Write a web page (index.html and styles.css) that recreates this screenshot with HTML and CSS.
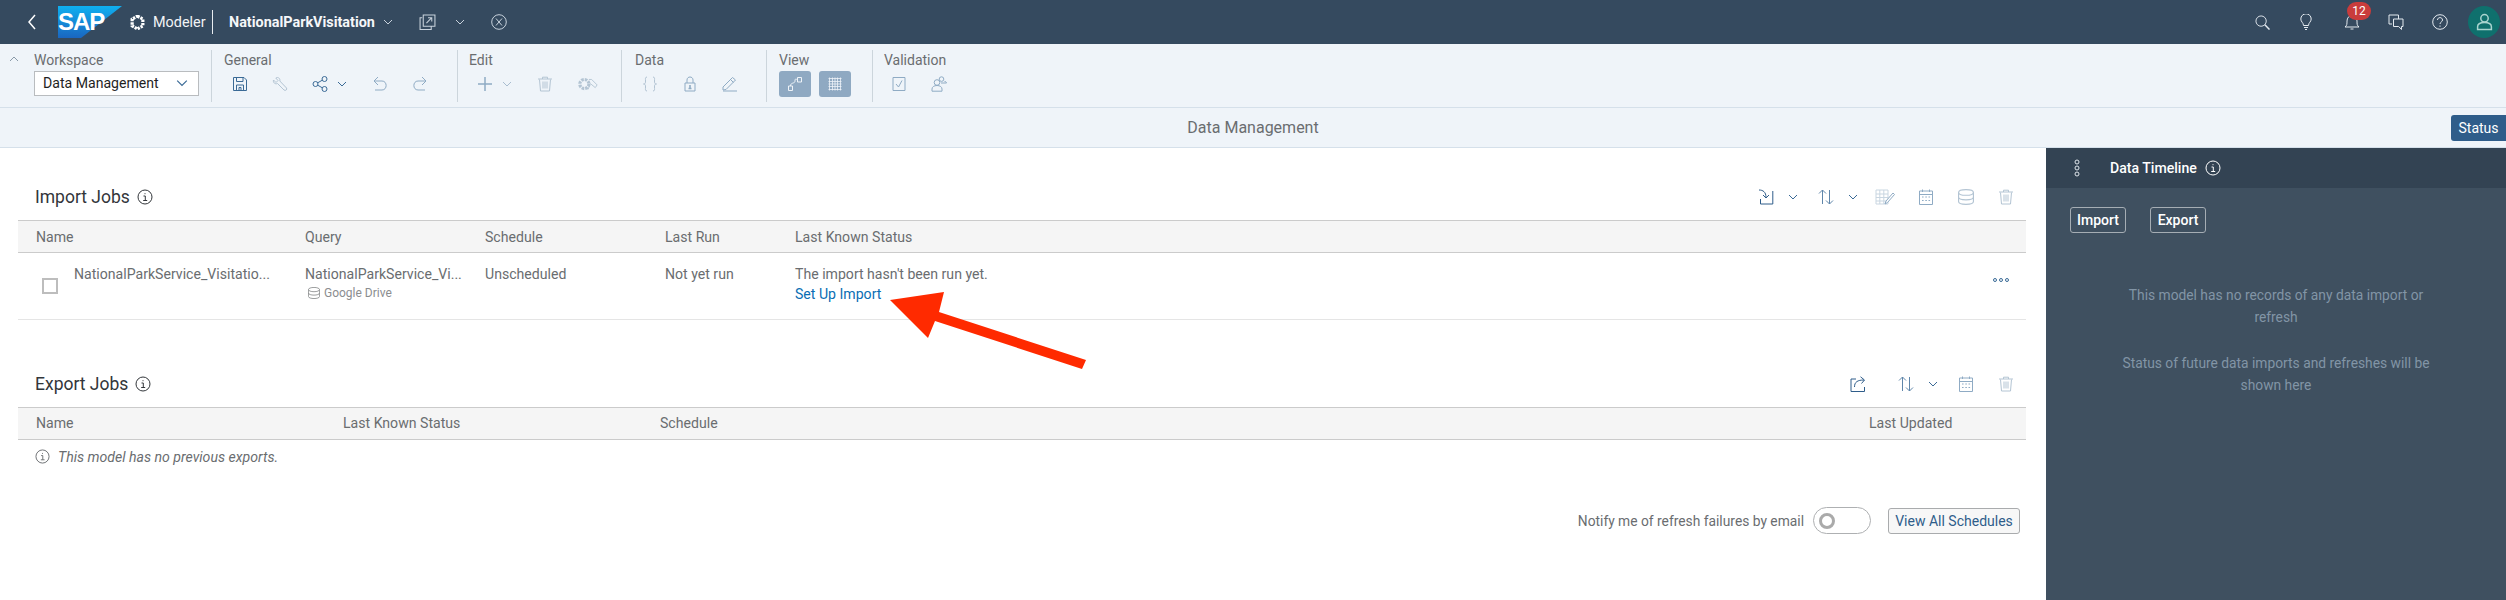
FILE: index.html
```html
<!DOCTYPE html>
<html lang="en">
  <head>
    <meta charset="UTF-8" />
    <title>Modeler - NationalParkVisitation</title>
    <link rel="stylesheet" href="styles.css">
  </head>
  <body>
    <svg class="sprite" width="0" height="0">
      <symbol id="chev" viewBox="0 0 10 10"><path d="M1 3l4 4 4-4"/></symbol>
      <symbol id="info" viewBox="0 0 16 16"><circle cx="8" cy="8" r="7"/><path d="M6.500 7H8.300v4.500M6.200 11.500h4M8 4.200v1"/></symbol>
      <symbol id="save" viewBox="0 0 16 16"><path d="M2 1.500h10l2.500 2.500v10.500H1.500V1.500zM4.500 1.500v4h6.500v-4M4.500 14.500V9h7v5.500M7 11.500h2v3H7z"/></symbol>
      <symbol id="wrench" viewBox="0 0 16 16"><path d="M1.500 4l2.500 2.500 2-2L3.800 2C6 .5 8.500 2.500 7.800 5l6.700 7c1 1.500-1 3.200-2.500 2L5.500 7.500C3 8.500 .8 6.500 1.500 4z"/></symbol>
      <symbol id="share" viewBox="0 0 16 16"><circle cx="3.500" cy="8" r="2.500"/><circle cx="12.500" cy="3" r="2.500"/><circle cx="12.500" cy="13" r="2.500"/><path d="M5.700 6.800l4.600-2.600M5.700 9.200l4.600 2.600"/></symbol>
      <symbol id="undo" viewBox="0 0 16 16"><path d="M6 1L2 5l4 4M2 5h8c5.500 0 5.500 9 0 9H3"/></symbol>
      <symbol id="redo" viewBox="0 0 16 16"><path d="M10 1l4 4-4 4M14 5H6c-5.500 0-5.500 9 0 9h7"/></symbol>
      <symbol id="plus" viewBox="0 0 16 16"><path d="M8 1v14M1 8h14" stroke-width="1.500"/></symbol>
      <symbol id="trash" viewBox="0 0 16 16"><path d="M1 3h14M5.500 3V1.200h5V3M2.500 3.500L3.500 15h9l1-11.500M6 5.500v7M8 5.500v7M10 5.500v7"/></symbol>
      <symbol id="gears" viewBox="0 0 22 16"><circle cx="7" cy="8" r="5" stroke-width="3.500" stroke-dasharray="2.800 1.100"/><path d="M12 3l3 0 6 6-2 3-5.500-4.500M13 9l-2 5"/></symbol>
      <symbol id="braces" viewBox="0 0 16 16"><path d="M5 1C3 1 3.500 3 3.500 5S3.500 8 1.500 8c2 0 2 1 2 3S3 15 5 15M11 1c2 0 1.500 2 1.500 4S12.500 8 14.500 8c-2 0-2 1-2 3S13 15 11 15"/></symbol>
      <symbol id="lock" viewBox="0 0 12 16"><path d="M1 7h10v8H1zM3 7V4c0-4 6-4 6 0v3"/><path d="M6 9v3.500M4.500 12.500h3" stroke-width="1.600"/></symbol>
      <symbol id="pen" viewBox="0 0 16 16"><path d="M1 11L10.500 1.500l3 2.500L4 13.500l-3 .5zM1 15h14M8.500 3.500l3 3"/></symbol>
      <symbol id="nodes" viewBox="0 0 16 16"><path d="M1.500 10h4v4.500h-4zM10.500 1.500h4V6h-4zM3.500 10C3.500 6 8 8 8 5s1-1.500 2.500-1.500"/></symbol>
      <symbol id="grid" viewBox="0 0 16 16"><path d="M2.500 1.500v13M5.500 1.500v13M8 1.500v13M10.500 1.500v13M13.500 1.500v13M1.500 2.500h13M1.500 5.500h13M1.500 8h13M1.500 10.500h13M1.500 13.500h13" stroke-width=".8"/></symbol>
      <symbol id="check" viewBox="0 0 16 16"><path d="M2 1.500h12v13H2zM5 8l2.500 3L11 4.500"/></symbol>
      <symbol id="users" viewBox="0 0 16 16"><circle cx="6" cy="6.500" r="2.800"/><path d="M1 15.200v-2.200c0-2 2-3.500 5-3.500s5 1.500 5 3.500v2.200zM10.500 .8a2.300 2.300 0 1 1 0 4.600 2.300 2.300 0 0 1 0-4.600zM10 7h5.500c0-1-1-1.600-2-1.600"/></symbol>
      <symbol id="search" viewBox="0 0 16 16"><circle cx="6.500" cy="6.500" r="5.500"/><path d="M10.500 10.500l5 5" stroke-width="1.600"/></symbol>
      <symbol id="bulb" viewBox="0 0 12 16"><path d="M3.500 11.500C3.500 8.500 .8 8 .8 5a5.200 5.200 0 0 1 10.400 0c0 3-2.700 3.500-2.700 6.500zM4 13.500h4M5 15.500h2"/></symbol>
      <symbol id="bell" viewBox="0 0 16 16"><path d="M1 13c2-1.500 2-3 2-6s2-5.500 5-5.500 5 2.500 5 5.500 0 4.500 2 6zM6.500 15h3"/></symbol>
      <symbol id="chat" viewBox="0 0 16 16"><path d="M4 10H1V1h9.500v4M5.500 5H15v7.500h-1.500v3l-2.800-3H5.500z"/></symbol>
      <symbol id="help" viewBox="0 0 16 16"><circle cx="8" cy="8" r="7.300"/><path d="M5.500 6c0-3.200 5-3.200 5 0 0 2-2.500 2-2.500 4M8 11.500v1.300"/></symbol>
      <symbol id="person" viewBox="0 0 16 16"><circle cx="8" cy="4.500" r="3.500"/><path d="M1.500 15v-2.500C1.500 10 3.500 8.500 8 8.500s6.500 1.500 6.500 4V15z"/></symbol>
      <symbol id="hex" viewBox="0 0 14 14"><path d="M7 1l5 2.800v6.400L7 13l-5-2.800V3.800z" stroke-width="3" stroke-dasharray="2.200 .9"/></symbol>
      <symbol id="popout" viewBox="0 0 16 16"><path d="M3 3.500H1v11h10.500V12M4 1h11v10.500H4zM7 8.500L12 3.500M8.500 3.500H12V7"/></symbol>
      <symbol id="close" viewBox="0 0 16 16"><circle cx="8" cy="8" r="7.300"/><path d="M5 4.500l6 7M11 4.500l-6 7"/></symbol>
      <symbol id="back" viewBox="0 0 10 16"><path d="M8 1L2 8l6 7"/></symbol>
      <symbol id="import" viewBox="0 0 16 16"><path d="M1 1c4 0 7 2 7 7.500M5 6l3 3 3-3M14.800 2v13H2.500v-5"/></symbol>
      <symbol id="sort" viewBox="0 0 16 16"><path d="M4.500 15V1M1 4.500L4.500 1 8 4.500M11.500 1v14M8 11.500l3.500 3.500 3.500-3.500"/></symbol>
      <symbol id="grid-edit" viewBox="0 0 20 16"><path d="M1 1h12v14H1zM1 5h12M1 8.500h12M1 12h12M4.800 1v14M8.800 1v14"/><path d="M10 15l1-3 7-8 1.500 1.500-7 8z" fill="#fff" stroke="#8fabc4"/></symbol>
      <symbol id="calendar" viewBox="0 0 14 16"><path d="M.5 2h13v13.500H.5zM.5 5.500h13M3.500 .5v2.500M10.500 .5v2.500M3 8h1.600M6.300 8h1.600M9.500 8h1.600M3 11.500h1.600M6.300 11.500h1.600M9.500 11.500h1.600"/></symbol>
      <symbol id="db" viewBox="0 0 14 14"><ellipse cx="7" cy="3" rx="6.500" ry="2.500"/><path d="M.5 3v8c0 3.300 13 3.300 13 0V3M.5 7c0 3.300 13 3.300 13 0"/></symbol>
      <symbol id="export" viewBox="0 0 16 16"><path d="M6 3H1v12.500h13.500V11M4.500 11c0-5 3-7 9.500-7M10.500 .8L14.500 4l-3 3.500"/></symbol>
      <symbol id="stops" viewBox="0 0 6 18"><circle cx="3" cy="3" r="2"/><circle cx="3" cy="9" r="2"/><circle cx="3" cy="15" r="2"/></symbol>
      <symbol id="dots" viewBox="0 0 16 4"><circle cx="2" cy="2" r="1.500"/><circle cx="8" cy="2" r="1.500"/><circle cx="14" cy="2" r="1.500"/></symbol>
    </svg>

    <header class="shellBar">
      <div class="shellLeft">
        <svg class="ico shellBack"><use href="#back"/></svg>
        <svg class="sapLogo" viewBox="0 0 64 32">
          <defs>
            <linearGradient id="sapBlue" x1="0" y1="0" x2="0" y2="1">
              <stop offset="0" stop-color="#0fb0f0"/>
              <stop offset="1" stop-color="#1a66c0"/>
            </linearGradient>
          </defs>
          <polygon points="0,0 64,0 23,32 0,32" fill="url(#sapBlue)"/>
          <text x="0" y="24" class="sapText">SAP</text>
        </svg>
        <svg class="ico hexIcon"><use href="#hex"/></svg>
        <span class="shellApp">Modeler</span>
        <span class="shellDivider"></span>
        <span class="shellModel">NationalParkVisitation</span>
        <svg class="ico shellChev"><use href="#chev"/></svg>
        <svg class="ico shellPop"><use href="#popout"/></svg>
        <svg class="ico shellChev2"><use href="#chev"/></svg>
        <svg class="ico shellClose"><use href="#close"/></svg>
      </div>
      <div class="shellRight">
        <svg class="ico shellIcon iconSearch"><use href="#search"/></svg>
        <svg class="ico shellIcon iconBulb"><use href="#bulb"/></svg>
        <div class="bellWrap">
          <svg class="ico shellIcon"><use href="#bell"/></svg>
          <span class="badge">12</span>
        </div>
        <svg class="ico shellIcon iconChat"><use href="#chat"/></svg>
        <svg class="ico shellIcon iconHelp"><use href="#help"/></svg>
        <div class="avatar"><svg class="ico avatarIcon"><use href="#person"/></svg></div>
      </div>
    </header>

    <section class="toolbar">
      <div class="collapseCell"><svg class="ico chevSmall"><use href="#chev"/></svg></div>
      <div class="toolGroup groupWorkspace">
        <div class="toolLabel">Workspace</div>
        <div class="workspaceSelect">Data Management <svg class="ico selectChev"><use href="#chev"/></svg></div>
      </div>
      <div class="toolGroup groupGeneral">
        <div class="toolLabel">General</div>
        <div class="toolRow">
          <span class="tool on"><svg class="ico"><use href="#save"/></svg></span>
          <span class="tool"><svg class="ico"><use href="#wrench"/></svg></span>
          <span class="tool on"><svg class="ico"><use href="#share"/></svg></span>
          <span class="toolChev on"><svg class="ico"><use href="#chev"/></svg></span>
          <span class="tool mid"><svg class="ico"><use href="#undo"/></svg></span>
          <span class="tool mid"><svg class="ico"><use href="#redo"/></svg></span>
        </div>
      </div>
      <div class="toolGroup groupEdit">
        <div class="toolLabel">Edit</div>
        <div class="toolRow">
          <span class="tool mid"><svg class="ico"><use href="#plus"/></svg></span>
          <span class="toolChev"><svg class="ico"><use href="#chev"/></svg></span>
          <span class="tool"><svg class="ico"><use href="#trash"/></svg></span>
          <span class="tool gearTool"><svg class="ico wideIcon"><use href="#gears"/></svg></span>
        </div>
      </div>
      <div class="toolGroup groupData">
        <div class="toolLabel">Data</div>
        <div class="toolRow">
          <span class="tool"><svg class="ico"><use href="#braces"/></svg></span>
          <span class="tool mid"><svg class="ico lock"><use href="#lock"/></svg></span>
          <span class="tool mid"><svg class="ico"><use href="#pen"/></svg></span>
        </div>
      </div>
      <div class="toolGroup groupView">
        <div class="toolLabel">View</div>
        <div class="toolRow viewRow">
          <span class="viewBtn"><svg class="ico"><use href="#nodes"/></svg></span>
          <span class="viewBtn"><svg class="ico"><use href="#grid"/></svg></span>
        </div>
      </div>
      <div class="toolGroup groupValidation">
        <div class="toolLabel">Validation</div>
        <div class="toolRow">
          <span class="tool mid"><svg class="ico"><use href="#check"/></svg></span>
          <span class="tool mid"><svg class="ico"><use href="#users"/></svg></span>
        </div>
      </div>
    </section>

    <section class="titleBar">
      <span></span>
      <span class="titleText">Data Management</span>
      <button class="statusBtn">Status</button>
    </section>

    <main class="mainArea">
      <div class="content">
        <div class="jobHead importHead">
          <h2>Import Jobs</h2>
          <svg class="ico infoIcon"><use href="#info"/></svg>
          <div class="jobTools">
            <span class="jobTool strong"><svg class="ico"><use href="#import"/></svg></span>
            <span class="jobChev"><svg class="ico"><use href="#chev"/></svg></span>
            <span class="jobTool sortTool"><svg class="ico"><use href="#sort"/></svg></span>
            <span class="jobChev"><svg class="ico"><use href="#chev"/></svg></span>
            <span class="jobTool pale wide"><svg class="ico wideIcon"><use href="#grid-edit"/></svg></span>
            <span class="jobTool soft"><svg class="ico"><use href="#calendar"/></svg></span>
            <span class="jobTool faint"><svg class="ico"><use href="#db"/></svg></span>
            <span class="jobTool faint"><svg class="ico"><use href="#trash"/></svg></span>
          </div>
        </div>
        <div class="tableRow headRow importCols">
          <span>Name</span><span>Query</span><span>Schedule</span><span>Last Run</span><span>Last Known Status</span>
        </div>
        <div class="tableRow bodyRow importCols">
          <div class="nameCell">
            <span class="checkbox"></span>
            <span>NationalParkService_Visitatio...</span>
          </div>
          <div>
            <div>NationalParkService_Vi...</div>
            <div class="subLine"><svg class="ico dbSmall"><use href="#db"/></svg>Google Drive</div>
          </div>
          <div>Unscheduled</div>
          <div>Not yet run</div>
          <div>
            <div>The import hasn't been run yet.</div>
            <a class="setupLink">Set Up Import</a>
          </div>
          <svg class="ico rowDots"><use href="#dots"/></svg>
        </div>

        <div class="jobHead exportHead">
          <h2>Export Jobs</h2>
          <svg class="ico infoIcon"><use href="#info"/></svg>
          <div class="jobTools">
            <span class="jobTool strong"><svg class="ico"><use href="#export"/></svg></span>
            <span class="jobTool sortTool sortExport"><svg class="ico"><use href="#sort"/></svg></span>
            <span class="jobChev"><svg class="ico"><use href="#chev"/></svg></span>
            <span class="jobTool soft"><svg class="ico"><use href="#calendar"/></svg></span>
            <span class="jobTool faint"><svg class="ico"><use href="#trash"/></svg></span>
          </div>
        </div>
        <div class="tableRow headRow exportCols">
          <span>Name</span><span>Last Known Status</span><span>Schedule</span><span>Last Updated</span>
        </div>
        <div class="emptyRow">
          <svg class="ico emptyInfo"><use href="#info"/></svg>
          <em>This model has no previous exports.</em>
        </div>

        <div class="footerRow">
          <span>Notify me of refresh failures by email</span>
          <span class="toggle"><span class="knob"></span></span>
          <button class="scheduleBtn">View All Schedules</button>
        </div>
      </div>

      <aside class="sidePanel">
        <div class="sideHead">
          <svg class="ico stops"><use href="#stops"/></svg>
          <span class="sideTitle">Data Timeline</span>
          <svg class="ico sideInfo"><use href="#info"/></svg>
        </div>
        <div class="sideButtons">
          <button class="sideBtn">Import</button>
          <button class="sideBtn">Export</button>
        </div>
        <p class="sideNote">This model has no records of any data import or<br>refresh</p>
        <p class="sideNote">Status of future data imports and refreshes will be<br>shown here</p>
      </aside>
    </main>

    <!-- annotation drawn over the screenshot -->
    <svg class="arrow" viewBox="0 0 200 85">
      <polygon points="2,10 56,2 51,22 198,70 194,79 47,31 40,48" fill="#ff2a00"/>
    </svg>
  </body>
</html>
```

FILE: styles.css
```css
* {
  box-sizing: border-box;
}

body {
  margin: 0;
  width: 2506px;
  height: 600px;
  overflow: hidden;
  position: relative;
  background: #fff;
  color: #6a6d70;
  font-family: Roboto, 'Liberation Sans', sans-serif;
  font-size: 14.1px;
}

.sprite {
  position: absolute;
}

.ico {
  width: 16px;
  height: 16px;
  fill: none;
  stroke: currentColor;
  stroke-width: 1;
  display: block;
  flex: none;
}

/* shell bar */
.shellBar {
  height: 44px;
  background: #354a5f;
  color: #fff;
  display: flex;
  justify-content: space-between;
  align-items: center;
}

.shellLeft,
.shellRight {
  display: flex;
  align-items: center;
}

.shellBack {
  width: 10px;
  height: 16px;
  margin-left: 27px;
  stroke-width: 1.5;
}

.sapLogo {
  width: 64px;
  height: 32px;
  margin-left: 21px;
}

.sapText {
  fill: #fff;
  font-family: 'Liberation Sans', sans-serif;
  font-weight: 700;
  font-size: 24px;
  letter-spacing: -1px;
}

.hexIcon {
  width: 15px;
  height: 15px;
  margin-left: 8px;
}

.shellApp {
  margin-left: 8px;
  width: 59px;
  font-size: 14.400px;
  color: #f2f4f6;
}

.shellDivider {
  width: 1px;
  height: 24px;
  background: #e8ecf0;
}

.shellModel {
  margin-left: 16px;
  font-size: 14.400px;
  font-weight: 700;
  color: #f5f7f9;
}

.shellChev,
.shellChev2 {
  width: 10px;
  height: 10px;
  color: #c8d2dc;
}

.shellChev {
  margin-left: 8px;
}

.shellPop {
  width: 17px;
  height: 17px;
  margin-left: 26px;
  color: #c8d2dc;
}

.shellChev2 {
  margin-left: 19px;
}

.shellClose {
  margin-left: 26px;
  color: #c8d2dc;
}

.shellRight {
  padding-right: 6px;
  color: #e4eaf0;
}

.iconBulb {
  width: 12px;
  margin-left: 30px;
}

.iconSearch {
  width: 15px;
  height: 15px;
}

.bellWrap {
  position: relative;
  margin-left: 32px;
}

.badge {
  position: absolute;
  left: 3px;
  top: -12px;
  width: 24px;
  height: 18px;
  border-radius: 9px;
  background: #c93c3c;
  color: #fff;
  font-size: 12px;
  line-height: 18px;
  text-align: center;
}

.iconChat {
  margin-left: 28px;
}

.iconHelp {
  margin-left: 28px;
}

.avatar {
  width: 32px;
  height: 32px;
  margin-left: 20px;
  border-radius: 50%;
  background: #0f706d;
  color: #a9d4cf;
  display: flex;
  align-items: center;
  justify-content: center;
}

.avatarIcon {
  width: 17px;
  height: 18px;
  stroke-width: 1.4;
}

/* toolbar */
.toolbar {
  height: 64px;
  background: #eff4f9;
  border-bottom: 1px solid #d5e0ea;
  padding-left: 7px;
  display: flex;
  align-items: flex-start;
}

.collapseCell {
  width: 27px;
  padding: 10px 0 0 2px;
  color: #8a9aa8;
}

.chevSmall {
  width: 10px;
  height: 10px;
  transform: scaleY(-1);
}

.toolGroup {
  height: 52px;
  margin-top: 6px;
  padding-left: 8px;
  border-left: 1px solid #ccd5dc;
}

.groupWorkspace {
  width: 177px;
  padding-left: 0;
  border-left: 0;
}

.groupGeneral {
  width: 246px;
}

.groupEdit {
  width: 164px;
  padding-left: 7px;
}

.groupData {
  width: 145px;
}

.groupView {
  width: 106px;
  padding-left: 12px;
}

.groupValidation {
  width: 160px;
  padding-left: 6px;
}

.toolLabel {
  height: 18px;
  padding-top: 1px;
  line-height: 18px;
  font-size: 14px;
  color: #6a6d70;
}

.groupGeneral .toolLabel,
.groupEdit .toolLabel {
  padding-left: 4px;
}

.groupData .toolLabel,
.groupValidation .toolLabel {
  padding-left: 5px;
}

.workspaceSelect {
  width: 165px;
  height: 25px;
  margin-top: 3px;
  padding: 0 8px;
  background: #fff;
  border: 1px solid #b9bcbf;
  color: #1f1f1f;
  line-height: 23px;
  position: relative;
}

.selectChev {
  position: absolute;
  right: 10px;
  top: 5px;
  width: 12px;
  height: 12px;
  color: #3a6a96;
}

.toolRow {
  height: 26px;
  margin-top: 3px;
  display: flex;
  align-items: center;
}

.tool {
  width: 40px;
  display: flex;
  justify-content: center;
  color: #b3c4d3;
}

.tool.mid {
  color: #8fabc4;
}

.tool.on {
  color: #3a6a96;
}

.toolChev {
  width: 23px;
  margin-left: -3px;
  display: flex;
  justify-content: flex-start;
  color: #a9bdd0;
}

.toolChev.on {
  color: #3a6a96;
}

.toolChev .ico {
  width: 10px;
  height: 10px;
}

.wideIcon {
  width: 20px;
}

.gearTool {
  margin-left: 3px;
}

.lock {
  width: 12px;
}

.viewRow {
  gap: 8px;
}

.viewBtn {
  width: 32px;
  height: 26px;
  border-radius: 3px;
  background: #8fa9c2;
  color: #eef3f8;
  display: flex;
  align-items: center;
  justify-content: center;
}

/* title bar */
.titleBar {
  height: 40px;
  background: #eff4f9;
  border-bottom: 1px solid #d5e0ea;
  display: grid;
  grid-template-columns: 1fr auto 1fr;
  align-items: center;
}

.titleText {
  font-size: 16px;
  color: #6a6d70;
}

.statusBtn {
  justify-self: end;
  width: 55px;
  height: 26px;
  padding: 0;
  border: 0;
  border-radius: 3px 0 0 3px;
  background: #2f5d8a;
  color: #fff;
  font-family: inherit;
  font-size: 14px;
}

/* main */
.mainArea {
  height: 452px;
  display: flex;
}

.content {
  width: 2046px;
  padding: 0 20px 0 18px;
}

.jobHead {
  height: 44px;
  padding: 0 0 3px 17px;
  display: flex;
  align-items: center;
}

.importHead {
  margin-top: 28px;
}

.exportHead {
  margin-top: 43px;
}

.jobHead h2 {
  margin: 0;
  font-size: 17.500px;
  font-weight: 400;
  color: #32363a;
}

.infoIcon {
  margin-left: 7px;
  width: 16px;
  height: 16px;
  color: #32363a;
}

.jobTools {
  margin-left: auto;
  display: flex;
  align-items: center;
  color: #2f5d8a;
}

.jobTool {
  width: 40px;
  display: flex;
  justify-content: center;
}

.jobTool.strong {
  color: #2f5d8a;
}

.jobTool.soft {
  color: #8fabc4;
}

.jobTool.faint {
  color: #b3c4d3;
}

.jobTool.pale {
  color: #c9d6e1;
}

.jobTool.wide {
  width: 38px;
  margin-right: 2px;
}

.sortTool {
  color: #5f86aa;
}

.sortExport {
  margin-left: 8px;
}

.jobChev {
  width: 10px;
  margin: 0 8px 0 2px;
  color: #3a6a96;
}

.jobChev .ico {
  width: 10px;
  height: 10px;
}

.tableRow {
  display: grid;
  position: relative;
}

.headRow {
  height: 33px;
  padding-left: 18px;
  align-items: center;
  background: #f5f5f5;
  border-top: 1px solid #cbcbcb;
  border-bottom: 1px solid #cbcbcb;
}

.importCols {
  grid-template-columns: 269px 180px 180px 130px 1fr;
}

.exportCols {
  padding-bottom: 1px;
  grid-template-columns: 307px 317px 1209px 1fr;
}

.bodyRow {
  height: 67px;
  padding: 12px 0 0 18px;
  border-bottom: 1px solid #e5e5e5;
  line-height: 18px;
}

.nameCell {
  display: flex;
  align-items: flex-start;
  gap: 16px;
  padding-left: 6px;
}

.checkbox {
  width: 16px;
  height: 16px;
  margin-top: 13px;
  border: 2px solid #bdbdbd;
  background: #fff;
  flex: none;
}

.subLine {
  display: flex;
  align-items: center;
  gap: 4px;
  padding-left: 3px;
  margin-top: 1px;
  font-size: 12px;
  color: #8b8d8f;
}

.dbSmall {
  width: 12px;
  height: 12px;
}

.setupLink {
  display: block;
  margin-top: 2px;
  color: #0a6eb4;
}

.rowDots {
  position: absolute;
  left: 1975px;
  top: 25px;
  width: 16px;
  height: 4px;
  color: #3a6a96;
}

.emptyRow {
  height: 33px;
  padding-left: 17px;
  display: flex;
  align-items: center;
  gap: 8px;
}

.emptyInfo {
  width: 15px;
  height: 15px;
  color: #6a6d70;
}

.footerRow {
  margin-top: 34px;
  padding-right: 6px;
  display: flex;
  justify-content: flex-end;
  align-items: center;
  height: 27px;
  font-size: 13.800px;
}

.toggle {
  width: 58px;
  height: 27px;
  margin-left: 9px;
  padding-left: 5px;
  border: 1px solid #aeb0b2;
  border-radius: 14px;
  background: #fff;
  display: flex;
  align-items: center;
}

.knob {
  width: 16px;
  height: 16px;
  border: 3px solid #aaa;
  border-radius: 50%;
}

.scheduleBtn {
  width: 132px;
  height: 26px;
  margin-left: 17px;
  padding: 0;
  border: 1px solid #a9abad;
  border-radius: 3px;
  background: #f7f7f7;
  color: #2f5d8a;
  font-family: inherit;
  font-size: 14px;
}

/* side panel */
.sidePanel {
  width: 460px;
  background: #3f5060;
  color: #8295a6;
}

.sideHead {
  height: 40px;
  padding-left: 28px;
  background: #334353;
  color: #fff;
  display: flex;
  align-items: center;
}

.stops {
  width: 6px;
  height: 18px;
  color: #dfe5ea;
}

.sideTitle {
  margin-left: 30px;
  font-weight: 500;
}

.sideInfo {
  margin-left: 8px;
  width: 16px;
  height: 16px;
}

.sideButtons {
  display: flex;
  gap: 24px;
  padding: 19px 0 0 24px;
}

.sideBtn {
  width: 56px;
  height: 26px;
  padding: 0;
  border: 1px solid #a5adb4;
  border-radius: 3px;
  background: transparent;
  color: #fff;
  font-family: inherit;
  font-size: 14px;
  font-weight: 500;
}

.sideNote {
  margin: 0 0 24px;
  font-size: 13.800px;
  line-height: 22px;
  text-align: center;
}

.sideButtons + .sideNote {
  margin-top: 51px;
}

/* red annotation */
.arrow {
  position: absolute;
  left: 888px;
  top: 290px;
  width: 200px;
  height: 85px;
}
```
